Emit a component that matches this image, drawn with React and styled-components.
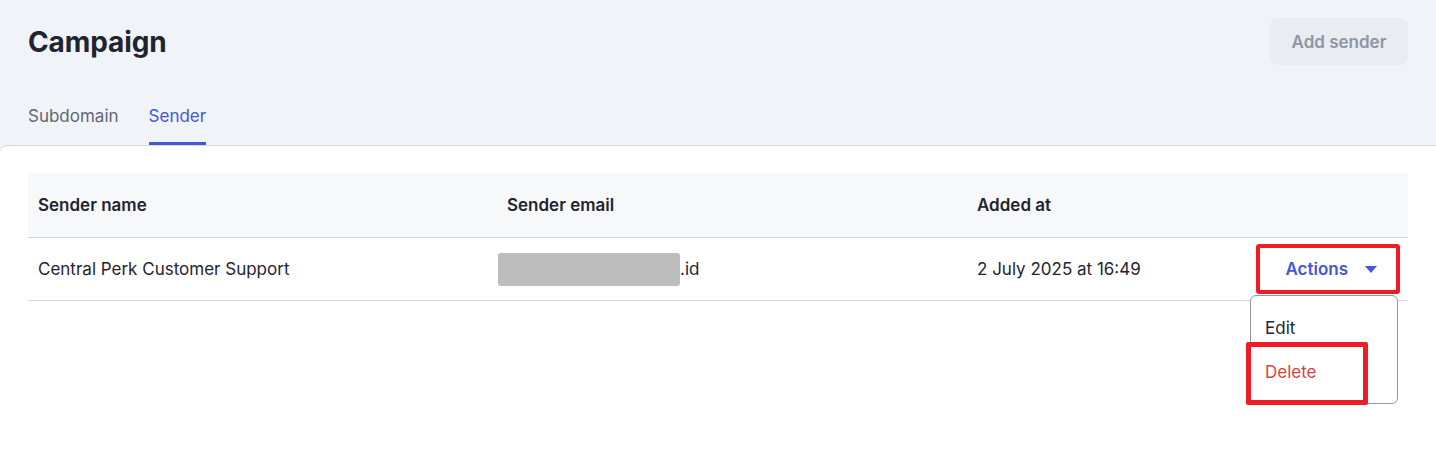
import React from "react"
import styled, { createGlobalStyle } from "styled-components"

const GlobalStyle = createGlobalStyle`
  html, body {
    margin: 0;
    padding: 0;
    background: #f0f3f8;
    font-family: Inter, "Noto Sans", sans-serif;
    color: #1f2430;
  }
  * {
    box-sizing: border-box;
  }
`

const Page = styled.div`
  width: 1436px;
  height: 454px;
  display: flex;
  flex-direction: column;
  overflow: hidden;
`

const Top = styled.header`
  padding: 18px 28px 0 28px;
`

const TitleRow = styled.div`
  display: flex;
  justify-content: space-between;
  align-items: center;
  height: 47px;
`

const Title = styled.h1`
  margin: 0;
  font-size: 28px;
  font-weight: 700;
  color: #1f2430;
  letter-spacing: -0.1px;
`

const AddButton = styled.button`
  height: 47px;
  width: 138px;
  border: none;
  border-radius: 8px;
  background: #e9ecf0;
  color: #8d96a6;
  font-family: inherit;
  font-size: 17px;
  font-weight: 600;
`

const Tabs = styled.nav`
  display: flex;
  gap: 30px;
  margin-top: 32px;
`

const Tab = styled.div`
  font-size: 17px;
  height: 48px;
  display: flex;
  align-items: center;
  padding-bottom: 7px;
  color: ${(p) => (p.$active ? "#4457d8" : "#5f6777")};
  border-bottom: 3px solid ${(p) => (p.$active ? "#4457d8" : "transparent")};
`

const Card = styled.main`
  flex: 1;
  background: #fff;
  border-top: 1px solid #d3d8e0;
  border-top-left-radius: 8px;
  padding: 27px 28px 0 28px;
`

const Table = styled.div`
  display: grid;
  grid-template-columns: 469px 470px 1fr 160px;
`

const HeadCell = styled.div`
  background: #f7f8fa;
  height: 65px;
  display: flex;
  align-items: center;
  padding: 0 10px;
  font-size: 17px;
  font-weight: 600;
  color: #1f2430;
  border-bottom: 1px solid #d3d8e0;
`

const Cell = styled.div`
  height: 63px;
  display: flex;
  align-items: center;
  padding: 0 10px;
  font-size: 17px;
  color: #1f2430;
  border-bottom: 1px solid #d3d8e0;
  justify-content: ${(p) => (p.$end ? "flex-end" : "flex-start")};
  position: relative;
`

const Redacted = styled.span`
  display: inline-block;
  width: 182px;
  height: 33px;
  background: #bdbdbd;
  border-radius: 3px;
  margin-left: -9px;
`

const ActionsButton = styled.button`
  position: relative;
  display: flex;
  align-items: center;
  gap: 17px;
  background: #fff;
  border: none;
  padding: 0 23px 0 29px;
  height: 50px;
  margin-right: -2px;
  color: #4457d8;
  font-family: inherit;
  font-size: 17px;
  font-weight: 600;
`

const Caret = styled.span`
  width: 0;
  height: 0;
  border-left: 6px solid transparent;
  border-right: 6px solid transparent;
  border-top: 7px solid #4457d8;
`

const Highlight = styled.span`
  position: absolute;
  inset: 0;
  border: 4px solid #ee1d25;
  border-radius: 3px;
  pointer-events: none;
`

const Menu = styled.div`
  position: absolute;
  top: 57px;
  right: 10px;
  width: 148px;
  height: 109px;
  background: #fff;
  border: 1px solid #8f98a8;
  border-radius: 6px;
  padding-top: 10px;
  z-index: 2;
`

const MenuItem = styled.div`
  position: relative;
  height: 44px;
  display: flex;
  align-items: center;
  padding-left: 14px;
  font-size: 17px;
  color: ${(p) => (p.$danger ? "#d8433f" : "#1f2430")};
`

const ItemHighlight = styled.span`
  position: absolute;
  left: -5px;
  top: -8px;
  width: 122px;
  height: 63px;
  border: 5px solid #ee1d25;
  border-radius: 2px;
`

export default function App() {
  return (
    <Page>
      <GlobalStyle />
      <Top>
        <TitleRow>
          <Title>Campaign</Title>
          <AddButton>Add sender</AddButton>
        </TitleRow>
        <Tabs>
          <Tab>Subdomain</Tab>
          <Tab $active>Sender</Tab>
        </Tabs>
      </Top>
      <Card>
        <Table>
          <HeadCell>Sender name</HeadCell>
          <HeadCell>Sender email</HeadCell>
          <HeadCell>Added at</HeadCell>
          <HeadCell />
          <Cell>Central Perk Customer Support</Cell>
          <Cell>
            <Redacted />
            .id
          </Cell>
          <Cell>2 July 2025 at 16:49</Cell>
          <Cell $end>
            <ActionsButton>
              Actions
              <Caret />
              <Highlight />
            </ActionsButton>
            <Menu>
              <MenuItem>Edit</MenuItem>
              <MenuItem $danger>
                Delete
                <ItemHighlight />
              </MenuItem>
            </Menu>
          </Cell>
        </Table>
      </Card>
    </Page>
  )
}
